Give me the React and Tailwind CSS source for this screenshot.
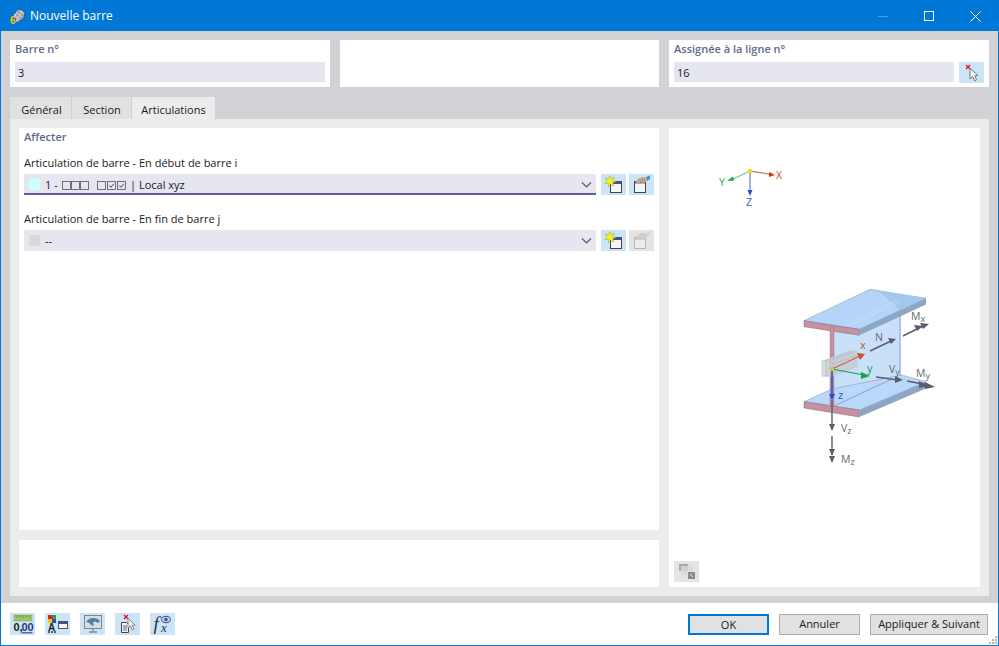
import React from 'react';

const font = { fontFamily: "'Open Sans', 'Noto Sans', sans-serif" };

const IconFrame = ({ children, disabled = false, className = '' }) => (
  <button
    type="button"
    className={`flex items-center justify-center h-[21px] w-[25px] shrink-0 ${disabled ? 'bg-[#e4e4e4]' : 'bg-[#cce4f7]'} ${className}`}
  >
    {children}
  </button>
);

const NewIcon = () => (
  <svg width="22" height="20" viewBox="0 0 22 20">
    <rect x="7.5" y="6.5" width="11" height="11" fill="#f4f4f4" stroke="#444" />
    <rect x="8" y="6" width="10" height="3" fill="#44528c" />
    <polygon
      points="7,0.5 8.2,3.6 11.5,2.2 10,5.2 13,6.5 9.8,7.6 10.8,11 7.6,9 5.6,11.5 5.2,8.2 1.8,8.4 4.2,6 2,3 5.2,3.8"
      fill="#f6f01e"
      stroke="#9aa24a"
      strokeWidth="0.5"
    />
  </svg>
);

const EditIcon = ({ disabled = false }) => (
  <svg width="22" height="20" viewBox="0 0 22 20" opacity={disabled ? 0.5 : 1}>
    <rect x="3.5" y="6.5" width="11" height="11" fill="#f4f4f4" stroke={disabled ? '#888' : '#444'} />
    <rect x="4" y="6" width="10" height="2.5" fill={disabled ? '#999' : '#6d6d7d'} />
    <path d="M5 7c1-3 5-5 9-5l2 2-1 3-3 1.5-2-1.5-3 2z" fill={disabled ? '#b5b5b5' : '#c9a48c'} />
    <path d="M7 5l2-1M9 6l3-2M11 7l3-2" stroke={disabled ? '#ddd' : '#a07a62'} strokeWidth="0.6" />
    <path d="M15 2l4-1.5V4l-3 2z" fill={disabled ? '#ccc' : '#4d90d6'} />
  </svg>
);

const PickIcon = () => (
  <svg width="20" height="20" viewBox="0 0 20 20">
    <path d="M4 2l4 4M8 2L4 6" stroke="#e8112d" strokeWidth="1.4" />
    <path d="M8 5v11l2.6-2.4 2 4.2 2-1-2-4 3.4-.2z" fill="#f4f4f4" stroke="#777" />
  </svg>
);

const ValuesIcon = () => (
  <svg width="22" height="20" viewBox="0 0 22 20">
    <rect x="2" y="1" width="18" height="6" fill="#9ac66a" stroke="#7ba556" strokeWidth="0.5" />
    <path d="M5 1v3M8 1v3M11 1v3M14 1v3M17 1v3" stroke="#5f8a42" strokeWidth="0.7" />
    <text x="1.5" y="17" fontSize="11" fontWeight="700" fill="#222" fontFamily="'Liberation Sans', sans-serif">0,</text>
    <text x="9.5" y="17" fontSize="11" fontWeight="700" fill="#24348a" fontFamily="'Liberation Sans', sans-serif">00</text>
    <path d="M9.5 18.8h11" stroke="#24348a" />
  </svg>
);

const ColorsIcon = () => (
  <svg width="22" height="20" viewBox="0 0 22 20">
    <rect x="1" y="1" width="4" height="4" fill="#e01e2d" />
    <rect x="5" y="1" width="4" height="4" fill="#3a9a35" />
    <rect x="1" y="5" width="4" height="4" fill="#f2c614" />
    <rect x="5" y="5" width="4" height="4" fill="#2b4bc4" />
    <text x="1" y="17" fontSize="10" fontWeight="700" fill="#222" fontFamily="'Liberation Sans', sans-serif">A</text>
    <path d="M1 18h2M4 18h2M7 18h2" stroke="#333" strokeWidth="1.5" />
    <rect x="11.5" y="7.5" width="9" height="7" fill="#f4f4f4" stroke="#555" />
    <rect x="12" y="8" width="8" height="2" fill="#44528c" />
  </svg>
);

const DisplayIcon = () => (
  <svg width="22" height="20" viewBox="0 0 22 20">
    <rect x="2.5" y="1.5" width="17" height="13" fill="#d5dde4" stroke="#7d8790" />
    <path d="M4 8c3-5 11-5 14-1l-2 2c-2-2-4-2-5 0l1 3-3-1c-1-2-3-3-5-3z" fill="#4f7fa3" />
    <path d="M11 15v2M7 18h8" stroke="#7d8790" strokeWidth="1.4" />
  </svg>
);

const NotePickIcon = () => (
  <svg width="22" height="20" viewBox="0 0 22 20">
    <path d="M7 1l4 4M11 1L7 5" stroke="#e8112d" strokeWidth="1.4" />
    <path d="M4.5 8.5h5l2 2v8h-7z" fill="#f4f4f4" stroke="#444" />
    <path d="M6 12h4M6 14h4M6 16h4" stroke="#444" strokeWidth="0.8" />
    <path d="M11 4v10l2.4-2 1.8 4 1.8-1-1.8-3.6 3-.2z" fill="#eee" stroke="#8a8a8a" />
  </svg>
);

const FormulaIcon = () => (
  <svg width="22" height="20" viewBox="0 0 22 20">
    <text x="1.5" y="16" fontSize="19" fontStyle="italic" fill="#333" fontFamily="'Liberation Serif', serif">f</text>
    <text x="9" y="18" fontSize="13" fontStyle="italic" fill="#333" fontFamily="'Liberation Serif', serif">x</text>
    <ellipse cx="14" cy="5.5" rx="4.5" ry="3.2" fill="#bcd0ea" stroke="#44528c" />
    <circle cx="14" cy="5.5" r="1.7" fill="#44528c" />
  </svg>
);

const Box = ({ checked = false }) => (
  <svg width="9" height="9" viewBox="0 0 9 9" className="shrink-0">
    <rect x="0.5" y="0.5" width="8" height="8" fill="none" stroke="#555" strokeWidth="0.8" />
    {checked && <path d="M2.2 4.5l1.7 1.8L6.8 2.8" fill="none" stroke="#333" strokeWidth="0.9" />}
  </svg>
);

const Chevron = () => (
  <svg width="11" height="6" viewBox="0 0 11 6" className="shrink-0">
    <path d="M1 .5l4.5 4.5L10 .5" fill="none" stroke="#555" strokeWidth="1.1" />
  </svg>
);

const Arrow = ({ d, tip, tip2, color = '#5c5c6e', w = 1.4 }) => (
  <g>
    <path d={d} fill="none" stroke={color} strokeWidth={w} />
    <polygon points={tip} fill={color} />
    {tip2 && <polygon points={tip2} fill={color} />}
  </g>
);

const Label = ({ x, y, t, sub, color = '#66666f', size = 10.5 }) => (
  <text x={x} y={y} fontSize={size} fill={color} fontFamily="'Open Sans', sans-serif">
    {t}
    {sub && <tspan fontSize={size - 1.5} dy="1.5">{sub}</tspan>}
  </text>
);

// axis cross + I-beam, coordinates are page pixels so they can be read off the screenshot
const BeamDrawing = () => (
  <svg viewBox="669 128 311 430" className="w-[311px] h-[430px]">
    {/* axis cross */}
    <path d="M750 171L772 174.5" stroke="#c98a7a" strokeWidth="1.3" />
    <polygon points="775,175 769,172 769,177" fill="#cf3a14" />
    <path d="M750 171L731 180" stroke="#7fc79a" strokeWidth="1.3" />
    <polygon points="727,181 733,176.5 734,180.5" fill="#16a34a" />
    <path d="M750 171V194" stroke="#9db4dc" strokeWidth="2" />
    <polygon points="747.5,190 752.5,190 750,196" fill="#1d4ed8" />
    <circle cx="750" cy="171" r="2.2" fill="#f5d90a" />
    <Label x={776} y={179} t="X" color="#cf4a24" size={10.5} />
    <Label x={719} y={186} t="Y" color="#28a860" size={10.5} />
    <Label x={746} y={206} t="Z" color="#3a66c8" size={10.5} />

    {/* web */}
    <polygon points="834,330 900,300 900,377 834,406" fill="#c8e0fa" />
    <polygon points="899,298 901,298 901,376 899,376" fill="#a9c6e4" />
    {/* bottom flange */}
    <polygon points="804,401.7 832,389 901.7,375 926,381.7 859.3,410" fill="#b9d8fa" stroke="#7d93ad" strokeWidth="0.5" />
    <path d="M834 406L890 380" stroke="#6d7f96" strokeWidth="0.6" />
    <polygon points="804,401.7 859.3,410 859.3,417 804,408" fill="#c9909f" stroke="#6e6e7e" strokeWidth="0.5" />
    <polygon points="859.3,410 926,381.7 926,388.5 859.3,417" fill="#8ea6c4" />
    {/* top flange */}
    <polygon points="804,320.7 870,289.3 926,298.3 859.3,329.3" fill="#b4d5f8" stroke="#7d93ad" strokeWidth="0.5" />
    <polygon points="870,289.3 926,298.3 900,310 881,293" fill="#a4c7ee" />
    <path d="M845 325L897 300M848 326L900 302" stroke="#cfe2f6" strokeWidth="0.6" />
    <polygon points="804,320.7 859.3,329.3 859.3,335.3 804,326.7" fill="#c9909f" stroke="#6e6e7e" strokeWidth="0.5" />
    <polygon points="859.3,329.3 926,298.3 926,304.5 859.3,335.3" fill="#8ea6c4" />
    {/* web edge */}
    <rect x="830" y="327" width="4" height="79" fill="#c9909f" stroke="#86707e" strokeWidth="0.4" />

    {/* hinge block */}
    <polygon points="822,361 850,350 858,352 858,367 832,377 822,376" fill="#c5ccd6" opacity="0.9" />
    <path d="M832 359L857 351M832 364L857 356" stroke="#a8adb5" strokeWidth="0.5" />
    <rect x="822" y="361" width="4" height="15" fill="#dcdfe3" stroke="#a8adb5" strokeWidth="0.5" />
    <rect x="826" y="360" width="4" height="16" fill="#cfd2d8" stroke="#a8adb5" strokeWidth="0.4" />

    {/* local axes */}
    <Arrow d="M832 369L860 356" tip="865,354 857,353 860,360" color="#cf4a24" w={1} />
    <Arrow d="M832 369L864 375" tip="870,376 861,372 861,379" color="#16a34a" w={1.2} />
    <path d="M832 369V396" stroke="#2a55c8" strokeWidth="1.6" />
    <polygon points="829,394 835,394 832,400" fill="#1d4ed8" />
    <rect x="830" y="367" width="4" height="4" fill="#d8c23c" />
    <Label x={860} y={349} t="x" color="#cf4a24" size={11} />
    <Label x={867} y={372} t="y" color="#16a34a" size={11} />
    <Label x={838} y={399} t="z" color="#2a55c8" size={11} />

    {/* internal forces */}
    <Arrow d="M870 351L891 341" tip="896,339 888,338 891,344" />
    <Arrow d="M903 336L923 326" tip="929,324 920,323 923,329" tip2="923,326 914,325 917,331" />
    <Arrow d="M876 377L898 380" tip="903,380 895,376 895,383" />
    <Arrow d="M907 381L928 385" tip="935,387 925,382 925,389" tip2="929,386 919,381 919,388" />
    <Arrow d="M832 400V425" tip="829,424 835,424 832,431" />
    <Arrow d="M832 436V455" tip="829,456 835,456 832,463" tip2="829,449 835,449 832,456" />
    <Label x={875} y={341} t="N" />
    <Label x={889} y={373} t="V" sub="y" />
    <Label x={916} y={377} t="M" sub="y" />
    <Label x={911} y={320} t="M" sub="x" />
    <Label x={841} y={432} t="V" sub="z" />
    <Label x={841} y={463} t="M" sub="z" />
  </svg>
);

const Combo = ({ swatch, children, active = false, editDisabled = false }) => (
  <div className="flex gap-[5px] h-[21px]">
    <div className={`flex-1 flex items-center pl-[5px] pr-[4px] bg-[#e6e6f0] ${active ? 'shadow-[inset_0_-2px_0_#5f5fa5]' : ''}`}>
      <span className={`w-[11px] h-[11px] mr-[5px] shrink-0 ${swatch}`} />
      <div className="flex-1 flex items-center text-[11px] text-[#1a1a1a] pt-[2px]">{children}</div>
      <Chevron />
    </div>
    <div className="flex gap-[3px]">
      <IconFrame><NewIcon /></IconFrame>
      <IconFrame disabled={editDisabled}><EditIcon disabled={editDisabled} /></IconFrame>
    </div>
  </div>
);

const Tab = ({ children, active = false, className = '' }) => (
  <div className={`flex items-center justify-center h-[22px] pt-[5px] text-[11px] text-[#1a1a1a] ${active ? 'bg-[#ececec]' : 'bg-[#e1e1e1]'} ${className}`}>
    {children}
  </div>
);

export default function App() {
  return (
    <div className="w-[999px] h-[646px] flex flex-col border border-[#0078d7] bg-white relative overflow-hidden" style={font}>
      {/* title bar */}
      <div className="flex items-center h-[30px] shrink-0 bg-[#0078d7] pl-[8px] text-white text-[12px]">
        <svg width="17" height="17" viewBox="0 0 17 17" className="mr-[4px]">
          <path d="M4 7l7-6 5 3-1 6-7 5z" fill="#9aa4b4" stroke="#3a3f4a" strokeWidth="0.7" />
          <path d="M7 4l6 5M5 6l5 6M10 2l5 4M13 3l-6 11M9 2L5 9" stroke="#e6e6e6" strokeWidth="0.7" />
          <text x="1" y="16" fontSize="10" fontWeight="700" fill="#f2c614" fontFamily="'Liberation Sans', sans-serif">6</text>
        </svg>
        <span>Nouvelle barre</span>
        <div className="ml-auto flex items-center">
          <div className="w-[46px] flex justify-center"><div className="w-[10px] h-px bg-[#4d9fe0]" /></div>
          <div className="w-[46px] flex justify-center"><div className="w-[10px] h-[10px] border border-white" /></div>
          <div className="w-[46px] flex justify-center">
            <svg width="11" height="11" viewBox="0 0 11 11"><path d="M.5.5l10 10M10.5.5l-10 10" stroke="#fff" /></svg>
          </div>
        </div>
      </div>

      {/* body */}
      <div className="flex-1 flex flex-col bg-[#d2d1d5] pt-[9px] px-[9px] pb-[7px]">
        <div className="flex gap-[10px] h-[47px]">
          <div className="w-[320px] bg-white px-[5px] pt-px">
            <div className="text-[11px] font-semibold text-[#5f6b8c] h-[21px] leading-[16px]">Barre n°</div>
            <div className="h-[20px] bg-[#e6e6f0] pl-[3px] text-[11px] leading-[22px] text-[#1a1a1a]">3</div>
          </div>
          <div className="w-[319px] bg-white" />
          <div className="w-[320px] bg-white px-[5px] pt-px">
            <div className="text-[11px] font-semibold text-[#5f6b8c] h-[21px] leading-[16px]">Assignée à la ligne n°</div>
            <div className="flex gap-[5px]">
              <div className="flex-1 h-[20px] bg-[#e6e6f0] pl-[3px] text-[11px] leading-[22px] text-[#1a1a1a]">16</div>
              <IconFrame><PickIcon /></IconFrame>
            </div>
          </div>
        </div>

        {/* tabs */}
        <div className="flex gap-px mt-[10px]">
          <Tab className="w-[61px] pl-[2px]">Général</Tab>
          <Tab className="w-[59px] pl-px">Section</Tab>
          <Tab active className="w-[83px]">Articulations</Tab>
        </div>

        <div className="flex-1 flex gap-[10px] bg-[#ececec] p-[9px]">
          <div className="w-[640px] flex flex-col gap-[10px]">
            <div className="flex-1 bg-white px-[5px] pt-px">
              <div className="text-[11px] font-semibold text-[#5f6b8c] h-[26px] leading-[16px]">Affecter</div>
              <div className="text-[11px] text-[#1a1a1a] h-[19px] leading-[16px]">Articulation de barre - En début de barre i</div>
              <Combo swatch="bg-[#ccffff]" active>
                <span className="w-[17px] shrink-0">1 -</span>
                <span className="flex items-center">
                  <Box /><Box /><Box />
                </span>
                <span className="flex items-center gap-px ml-[8px]">
                  <Box /><Box checked /><Box checked />
                </span>
                <span className="ml-[4px]">| Local xyz</span>
              </Combo>
              <div className="text-[11px] text-[#1a1a1a] h-[18px] mt-[16px] leading-[16px]">Articulation de barre - En fin de barre j</div>
              <div className="mt-px">
                <Combo swatch="bg-[#d9d9d9]" editDisabled>--</Combo>
              </div>
            </div>
            <div className="h-[47px] bg-white shrink-0" />
          </div>

          <div className="flex-1 flex flex-col justify-between bg-white">
            <BeamDrawing />
            <div className="pl-[5px] pb-[5px]">
              <div className="flex items-center justify-center w-[25px] h-[21px] bg-[#e4e4e4]">
                <svg width="20" height="18" viewBox="0 0 20 18">
                  <rect x="2" y="1" width="9" height="7" fill="#a9a9a9" />
                  <rect x="4" y="3" width="12" height="9" fill="#d9d9d9" opacity="0.8" />
                  <rect x="11" y="9" width="7" height="7" fill="#8a8a8a" />
                  <path d="M13 11l3 3" stroke="#e4e4e4" />
                </svg>
              </div>
            </div>
          </div>
        </div>
      </div>

      {/* footer */}
      <div className="h-[42px] shrink-0 flex items-center pl-[9px] pr-[10px] bg-white">
        <div className="flex gap-[10px]">
          <IconFrame className="h-[22px]"><ValuesIcon /></IconFrame>
          <IconFrame className="h-[22px]"><ColorsIcon /></IconFrame>
          <IconFrame className="h-[22px]"><DisplayIcon /></IconFrame>
          <IconFrame className="h-[22px]"><NotePickIcon /></IconFrame>
          <IconFrame className="h-[22px]"><FormulaIcon /></IconFrame>
        </div>
        <div className="ml-auto flex gap-[10px] text-[11px] text-[#1a1a1a]">
          <button type="button" className="w-[81px] h-[21px] pt-px bg-[#e1e1e1] border-2 border-[#0078d7]">OK</button>
          <button type="button" className="w-[81px] h-[21px] pt-px bg-[#e1e1e1] border border-[#adadad]">Annuler</button>
          <button type="button" className="w-[118px] h-[21px] pt-px bg-[#e1e1e1] border border-[#adadad]">Appliquer &amp; Suivant</button>
        </div>
      </div>

      {/* resize grip */}
      <svg width="10" height="10" viewBox="0 0 10 10" className="absolute right-0 bottom-0">
        <path d="M7 1h2v2H7zM4 4h2v2H4zM7 4h2v2H7zM1 7h2v2H1zM4 7h2v2H4zM7 7h2v2H7z" fill="#b5b5b5" />
      </svg>
    </div>
  );
}
